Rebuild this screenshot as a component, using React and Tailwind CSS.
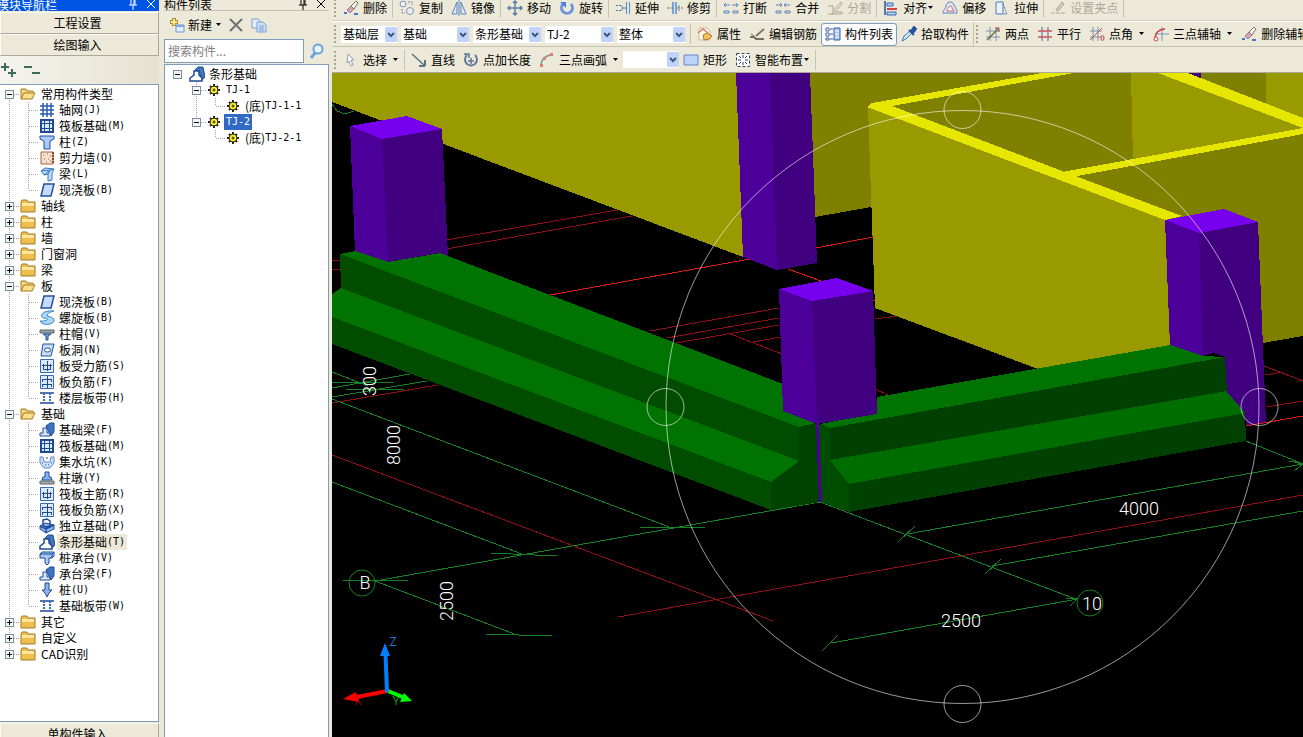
import React, { useState } from 'react';
import clsx from 'clsx';

// Small drawings used by the toolbars and the trees, all on a 16x16 grid
const icons = {
  erase: (
    <>
      <path d="M1 13h3M11 14h4" stroke="#4a74c9" strokeWidth="2" />
      <path d="M4 10l4-4 3 3-4 4z" fill="#d9a3b4" stroke="#8b7f8f" />
      <path d="M8 6l5-5 2 2-4 6z" fill="#f2f2ea" stroke="#77776f" />
    </>
  ),
  copyObj: (
    <>
      <circle cx="4" cy="4" r="3" fill="#e8edf5" stroke="#8794aa" />
      <circle cx="11" cy="11" r="3.5" fill="#e8edf5" stroke="#8794aa" />
      <path d="M9 2h4v3M3 9v4h3" stroke="#5f7fb5" strokeDasharray="2 1" fill="none" />
    </>
  ),
  mirror: (
    <path d="M6 2v12H1zM10 2v12h5zM8 0v16" fill="#dfe9f8" stroke="#5a82bd" />
  ),
  move: (
    <path d="M8 1v14M1 8h14M6 3l2-2 2 2M6 13l2 2 2-2M3 6L1 8l2 2M13 6l2 2-2 2" fill="none" stroke="#5d7da8" strokeWidth="1.5" />
  ),
  rotate: (
    <>
      <path d="M4 4a5.500 5.500 0 1 0 8 0" fill="none" stroke="#6f94dd" strokeWidth="3" />
      <path d="M1 2h6v6z" fill="#4f7ed6" />
    </>
  ),
  extend: (
    <>
      <path d="M1 5.500h6v5H1" fill="none" stroke="#4c72ad" strokeDasharray="2 1" />
      <path d="M7 8h4" stroke="#4c72ad" />
      <path d="M11.500 2v12M14.500 2v12" stroke="#4c8bdb" />
    </>
  ),
  trim: (
    <>
      <path d="M6 2v12M9 2v12" stroke="#4c8bdb" strokeWidth="1.500" />
      <path d="M0 8h6M10 8h6M12 5v6" stroke="#6d7c94" strokeDasharray="3 1" />
    </>
  ),
  breakLine: (
    <path d="M1 5h6M9 5h6M3 3L1 5l2 2M13 3l2 2-2 2M1 11h5v2H1zM10 11h5v2h-5z" fill="none" stroke="#5f83b7" />
  ),
  merge: (
    <path d="M1 5h6M9 5h6M5 3l2 2-2 2M11 3L9 5l2 2M1 11h5v2H1zM10 11h5v2h-5z" fill="none" stroke="#5f83b7" />
  ),
  split: (
    <path d="M1 6h5v8H1M7 12h8v2H4M6 11l8-9 1 2-7 8" fill="none" stroke="#aaa798" />
  ),
  align: (
    <>
      <path d="M2 1v14" stroke="#27509f" strokeWidth="1.500" />
      <path d="M4 3h6v3H4zM4 12h9v3H4z" fill="#b7d0f5" stroke="#3866b5" />
      <path d="M4 9h10" stroke="#cf4343" strokeWidth="2" />
    </>
  ),
  offset: (
    <>
      <path d="M1 13c0-5 3-3 3-7s6-6 8-1c1 3 3 3 3 8z" fill="#dce7f7" stroke="#5f83b7" />
      <path d="M5 11c0-3 1-2 2-4s3-1 3 1 2 1 2 3z" fill="#fff" stroke="#d45a5a" />
    </>
  ),
  stretch: (
    <>
      <path d="M2 2h7v12H2z" fill="#eaf1fb" stroke="#4f79b7" />
      <path d="M9 4l4 10H9" fill="none" stroke="#4f79b7" strokeDasharray="2 1" />
    </>
  ),
  grip: (
    <path d="M1 13h4M11 13h4M6 13h4M6 10l6-8 2 2-6 7z" fill="#cfccbd" stroke="#aaa798" />
  ),
  props: (
    <>
      <path d="M2 2h8l3 3v9H2z" fill="#fdfaf0" stroke="#d8b48a" />
      <path d="M1 7l5-4 5 4" fill="none" stroke="#df7a6a" strokeWidth="1.500" />
      <path d="M6 9l4-2 5 3-3 3-5 1z" fill="#f3c45b" stroke="#a7782c" />
    </>
  ),
  editBar: (
    <>
      <path d="M1 11h4l2 2h8" fill="none" stroke="#494a40" strokeWidth="1.500" />
      <path d="M7 10l8-7" stroke="#7d7a68" strokeWidth="2" />
      <path d="M2 8l3 2" stroke="#a23c3c" />
    </>
  ),
  list: (
    <>
      <path d="M1 2h3v3H1zM1 7h3v3H1zM1 12h3v2H1z" fill="#fff" stroke="#3963a5" />
      <path d="M5 3h3M5 8h3M5 13h3" stroke="#3963a5" />
      <path d="M9 2h6v12H9z" fill="#a9c6f3" stroke="#3963a5" />
      <path d="M10 5h4M10 8h4M10 11h4" stroke="#fff" />
    </>
  ),
  pick: (
    <>
      <path d="M1 15l2-5 6-5 2 2-6 6z" fill="#cfe4fb" stroke="#4878bd" />
      <path d="M8 4l5 5M10 5l3-4 2 2-3 4z" fill="#2a60b8" stroke="#23509d" strokeWidth="2" />
    </>
  ),
  twoPoint: (
    <>
      <path d="M5 1v14M11 1v14M1 5h14M1 11h14" stroke="#7d8fb0" />
      <path d="M2 14L14 2" stroke="#6c6f3c" strokeWidth="1.500" />
      <path d="M10 2h4v4" fill="none" stroke="#c25050" />
    </>
  ),
  parallel: (
    <>
      <path d="M5 1v14M11 1v14" stroke="#7d8fb0" strokeWidth="1.500" />
      <path d="M1 5h14M1 11h14" stroke="#cc5555" strokeWidth="1.500" />
    </>
  ),
  pointAngle: (
    <>
      <path d="M4 1v14M9 1v14M1 5h12M1 11h12" stroke="#7d8fb0" />
      <path d="M1 14L13 2" stroke="#c25050" />
      <ellipse cx="13.500" cy="12" rx="1.500" ry="2.500" fill="none" stroke="#cc3b3b" />
    </>
  ),
  threeAxis: (
    <>
      <path d="M9 1v14M2 8h14" stroke="#7d8fb0" />
      <path d="M2 13c0-6 4-10 10-10" fill="none" stroke="#cc4444" strokeWidth="1.500" />
      <circle cx="3" cy="13" r="2" fill="#fff" stroke="#cc4444" />
    </>
  ),
  cursor: (
    <path d="M5 2l6 6H8l2 5-2 1-2-5-2 2z" fill="#fff" stroke="#8e9db8" />
  ),
  line: (
    <>
      <path d="M1 2l12 11" stroke="#5d7387" strokeWidth="1.500" />
      <path d="M14 14V8M14 14H8" stroke="#5d7387" strokeWidth="2" />
    </>
  ),
  pointLength: (
    <>
      <path d="M4 3a6 6 0 1 0 8 0" fill="none" stroke="#5f7896" strokeWidth="2" />
      <path d="M8 6v6M5 9h6M1 2h5v4" fill="none" stroke="#5f7896" strokeWidth="1.500" />
    </>
  ),
  arc: (
    <>
      <path d="M2 14C2 7 7 3 13 3" fill="none" stroke="#7e91a5" strokeWidth="1.500" />
      <path d="M1 12h3v3H1zM4 5h3v3H4zM11 1h3v3h-3z" fill="#df7d73" />
    </>
  ),
  rect: <path d="M1 3h14v10H1z" fill="#bdd2fb" stroke="#6585c8" />,
  smart: (
    <>
      <path d="M1.500 1.500h13v13h-13z" fill="#fff" stroke="#35425c" strokeDasharray="3 2" />
      <path d="M8 3v3M8 10v3M3 8h3M10 8h3M4 4l2 2M12 4l-2 2M4 12l2-2M12 12l-2-2" stroke="#35425c" />
    </>
  ),
  folder: (
    <>
      <path d="M1 4l1-2h5l1 2h7v10H1z" fill="#eebf4d" stroke="#a87a22" />
      <path d="M2 5h12v3H2z" fill="#fbe7a1" />
    </>
  ),
  folderOpen: (
    <>
      <path d="M1 13V3h5l1 2h6v3" fill="#f6d67c" stroke="#a87a22" />
      <path d="M1 13l3-6h11l-3 6z" fill="#fbe08b" stroke="#a87a22" />
    </>
  ),
  grid: (
    <path d="M4 1v14M8 1v14M12 1v14M1 4h14M1 8h14M1 12h14" stroke="#2a5cad" strokeWidth="1.500" />
  ),
  raft: (
    <>
      <path d="M2 2h12v12H2z" fill="#dce9fb" stroke="#1e4a94" strokeWidth="2" />
      <path d="M5.500 3v10M10.500 3v10M3 5.500h10M3 10.500h10" fill="none" stroke="#1e4a94" />
    </>
  ),
  column: (
    <path d="M1 2h14v3l-4 2v8H5V7L1 5z" fill="#a9c9f7" stroke="#23509d" />
  ),
  shearWall: (
    <>
      <path d="M2 2h12v12H2z" fill="#f3e0cf" stroke="#a5653e" />
      <path d="M4 5h1M8 4h1M11 6h1M5 9h1M9 9h1M7 12h1M11 11h1" stroke="#c94d3a" />
      <path d="M14 2v12" stroke="#87492c" strokeDasharray="2 1" strokeWidth="2" />
    </>
  ),
  beam: (
    <path d="M2 5l4-3 9 1-2 4v7l-4 1V8l-4 1zM2 5l9-1 4-1M11 4L9 8M5 9l6-5" fill="#bcdcf9" stroke="#3477c4" />
  ),
  slab: <path d="M5 2h10l-3 12H2z" fill="#c5dcfb" stroke="#23509d" strokeWidth="1.500" />,
  spiral: (
    <path d="M15 1C6 0 1 4 3 7c2 2 7 1 5 3-1 1-4 1-7 1 2 5 13 4 14 0 1-4-5-4-7-5 0-3 4-4 7-5z" fill="#a8d8f7" stroke="#3d83c9" />
  ),
  cap: (
    <>
      <path d="M1 4h14v3H1z" fill="#9aa2a6" stroke="#5c666b" />
      <path d="M4 8h8l-3 2v4H7v-4z" fill="#7fa8ea" stroke="#23509d" />
    </>
  ),
  hole: (
    <>
      <path d="M4 2h11l-3 12H2z" fill="#c5dcfb" stroke="#23509d" />
      <ellipse cx="8.500" cy="8" rx="3" ry="2" fill="#fff" stroke="#23509d" />
    </>
  ),
  slabRebar: (
    <>
      <path d="M1.500 1.500h13v13h-13z" fill="#dce9fb" stroke="#3a69b8" />
      <path d="M4.500 6v5.500h7V6M8.500 3v10M3 7.500h10" fill="none" stroke="#1e4a94" />
    </>
  ),
  negRebar: (
    <>
      <path d="M1.500 1.500h13v13h-13z" fill="#dce9fb" stroke="#3a69b8" />
      <path d="M8.500 2v12M3 5.500h10M3 10.500h10M3.500 6v2M12.500 6v2M3.500 11v2M12.500 11v2" stroke="#1e4a94" />
    </>
  ),
  strap: (
    <>
      <path d="M1 3h14M1 13h14" stroke="#1e4a94" strokeWidth="1.500" />
      <path d="M5 3v10M11 3v10" stroke="#3a69b8" strokeWidth="2" strokeDasharray="2 1" />
    </>
  ),
  foundBeam: (
    <>
      <path d="M7 4l4-3h4v9l-3 4z" fill="#3c72c4" stroke="#1e4a94" />
      <path d="M1 14v-3h3V6h4v5h3v3z" fill="#d6e6fc" stroke="#1e4a94" />
    </>
  ),
  sump: (
    <>
      <path d="M1 3h3l1 5h6l1-5h3v6l-4 5H5L1 9z" fill="#cfe0f8" stroke="#5c8ad0" />
      <path d="M3 9h1M6 11h1M9 11h1M12 9h1M7 4h2" stroke="#1e4a94" />
    </>
  ),
  pier: (
    <>
      <path d="M6 2h4v5h2l1 3H3l1-3h2z" fill="#8db3ef" stroke="#23509d" />
      <path d="M1 11h14v3H1z" fill="#a3a9ac" stroke="#5c666b" />
    </>
  ),
  isolated: (
    <>
      <path d="M1 8l5-3 9 2v4l-8 4-6-4z" fill="#8fb3ea" stroke="#1e4a94" />
      <path d="M4 2l4-1 3 2v5L7 9 4 7zM1 8l6 3 8-4M7 11v4" fill="none" stroke="#1e4a94" strokeWidth="1.500" />
    </>
  ),
  strip: (
    <>
      <path d="M6 4l3-3h5l2 10-3 3-3-9z" fill="#4576bd" stroke="#1e4a94" />
      <path d="M5 5h5v4l3 3v3H1v-3l4-3z" fill="#fff" stroke="#1e4a94" strokeWidth="1.500" />
    </>
  ),
  pileCap: (
    <path d="M1 4l2-2h12v4l-2 2h-3v5l-2 2-2-2V8H1zM1 4h12v4M13 4l2-2" fill="#a9c9f7" stroke="#1e4a94" />
  ),
  pile: <path d="M6 1h4v7h3l-3 3-2 4-2-4-3-3h3z" fill="#8fb3ea" stroke="#1e4a94" />,
  gear: (
    <>
      <path d="M8 2v12M2 8h12M4 4l8 8M12 4l-8 8" stroke="#222" strokeWidth="2" />
      <circle cx="8" cy="8" r="4" fill="#ffee22" stroke="#222" />
      <circle cx="8" cy="8" r="1" fill="#fff" stroke="#222" />
    </>
  ),
  newItem: (
    <>
      <path d="M5 1v8M1 5h8" stroke="#a98f35" strokeWidth="4" />
      <path d="M5 2v6M2 5h6" stroke="#fbe98c" strokeWidth="2" />
      <path d="M7 8h8v7H7z" fill="#e4eefc" stroke="#7496c9" />
      <path d="M7 8h8v2H7z" fill="#7ba6ea" />
    </>
  ),
  remove: <path d="M2 2l12 12M14 2L2 14" stroke="#6f7377" strokeWidth="2" />,
  duplicate: (
    <>
      <path d="M1 2h6l2 2v7H1z" fill="#e4eefc" stroke="#7d9fd0" />
      <path d="M6 5h6l3 3v7H6z" fill="#cfe0f8" stroke="#7d9fd0" />
      <path d="M8 9h5M8 11h5M8 13h5" stroke="#7d9fd0" />
    </>
  ),
  search: (
    <>
      <circle cx="9" cy="6" r="4.500" fill="#e9f5fe" stroke="#6aa3de" strokeWidth="2" />
      <path d="M6 10l-4 5" stroke="#6aa3de" strokeWidth="3" />
    </>
  ),
  expandAll: (
    <path d="M5 1v8M1 5h8M12 7v8M8 11h8" stroke="#3d6b5c" strokeWidth="2" />
  ),
  collapseAll: <path d="M0 5h8M8 11h8" stroke="#3d6b5c" strokeWidth="2" />,
  pin: (
    <path d="M5 3h6M6 3v6M10 3v6M9 3v6M4 9h8M8 9v5" fill="none" stroke="currentColor" />
  ),
  close: <path d="M4 4l8 8M12 4l-8 8" stroke="currentColor" />
};

const Icon = ({ name }) => (
  <svg viewBox="0 0 16 16" className="h-4 w-4 shrink-0" fill="none" aria-hidden="true">
    {icons[name]}
  </svg>
);

const Caret = () => (
  <svg viewBox="0 0 7 4" className="h-1 w-[7px] shrink-0" aria-hidden="true">
    <path d="M1 0h5L3.500 3z" fill="#000" />
  </svg>
);

const ToolButton = ({ icon, label, menu, pressed, disabled }) => (
  <button
    type="button"
    disabled={disabled}
    aria-pressed={pressed}
    className={clsx(
      'flex h-[23px] shrink-0 items-center whitespace-nowrap',
      pressed ? 'rounded-[3px] border border-[#7b9ebd] bg-[#fbfbf9] px-[3px]' : 'px-1',
      disabled && 'text-[#aca899]'
    )}
  >
    <Icon name={icon} />
    <span className={clsx('pl-1', menu === 'split' && 'pr-[5px]')}>{label}</span>
    {menu && <Caret />}
  </button>
);

const Separator = () => <span className="ml-px mr-[2px] h-5 w-px shrink-0 bg-[#c5c2b2]" />;

const Grip = () => <span className="mx-[2px] h-[18px] w-[3px] shrink-0 border-l-2 border-dotted border-[#a8a595]" />;

const Combo = ({ label, options, narrow }) => (
  <div className={clsx('relative h-[17px] shrink-0 bg-white', narrow ? 'w-14' : 'w-[68px]')}>
    <select aria-label={label} className="h-full w-full appearance-none truncate bg-transparent pl-[2px] pr-3 leading-4 outline-none">
      {options.map((option) => (
        <option key={option}>{option}</option>
      ))}
    </select>
    <svg viewBox="0 0 12 15" className="pointer-events-none absolute right-0 top-px h-[15px] w-3" aria-hidden="true">
      <rect width="12" height="15" rx="1" fill="#c1d3fb" />
      <path d="M3 6l3 3 3-3" fill="none" stroke="#3f557d" strokeWidth="2" />
    </svg>
  </div>
);

const editTools = [
  [{ icon: 'erase', label: '删除' }],
  [{ icon: 'copyObj', label: '复制' }, { icon: 'mirror', label: '镜像' }],
  [{ icon: 'move', label: '移动' }, { icon: 'rotate', label: '旋转' }],
  [{ icon: 'extend', label: '延伸' }, { icon: 'trim', label: '修剪' }],
  [{ icon: 'breakLine', label: '打断' }, { icon: 'merge', label: '合并' }, { icon: 'split', label: '分割', disabled: true }],
  [{ icon: 'align', label: '对齐', menu: 'drop' }, { icon: 'offset', label: '偏移' }, { icon: 'stretch', label: '拉伸' }],
  [{ icon: 'grip', label: '设置夹点', disabled: true }]
];

const axisTools = [
  { icon: 'twoPoint', label: '两点' },
  { icon: 'parallel', label: '平行' },
  { icon: 'pointAngle', label: '点角', menu: 'split' },
  { icon: 'threeAxis', label: '三点辅轴', menu: 'split' },
  { icon: 'erase', label: '删除辅轴' }
];

const Toolbars = () => (
  <div className="shrink-0 border-b border-[#aca899]">
    <div className="-mt-[5px] flex h-[26px] items-center border-b border-[#d0cdbc]">
      <Grip />
      {editTools.map((group, index) => (
        <React.Fragment key={index}>
          {index > 0 && <Separator />}
          {group.map((tool) => (
            <ToolButton key={tool.label} {...tool} />
          ))}
        </React.Fragment>
      ))}
      <Separator />
    </div>

    <div className="flex h-[26px] items-center border-b border-[#c5c2b2] border-t border-t-white">
      <Grip />
      <div className="flex shrink-0 gap-1 pl-[2px] pr-1">
        <Combo label="楼层" options={['基础层']} narrow />
        <Combo label="构件分类" options={['基础']} />
        <Combo label="构件类型" options={['条形基础']} />
        <Combo label="构件" options={['TJ-2', 'TJ-1']} />
        <Combo label="显示范围" options={['整体']} />
      </div>
      <Separator />
      <ToolButton icon="props" label="属性" />
      <ToolButton icon="editBar" label="编辑钢筋" />
      <ToolButton icon="list" label="构件列表" pressed />
      <ToolButton icon="pick" label="拾取构件" />
      <div className="flex h-full shrink-0 items-center border-l border-[#c5c2b2]">
        <Grip />
        {axisTools.map((tool) => (
          <ToolButton key={tool.label} {...tool} />
        ))}
      </div>
    </div>

    <div className="flex h-[25px] items-center">
      <Grip />
      <ToolButton icon="cursor" label="选择" menu="split" />
      <Separator />
      <ToolButton icon="line" label="直线" />
      <ToolButton icon="pointLength" label="点加长度" />
      <ToolButton icon="arc" label="三点画弧" menu="split" />
      <Combo label="画弧方式" options={['']} narrow />
      <ToolButton icon="rect" label="矩形" />
      <ToolButton icon="smart" label="智能布置" menu="drop" />
      <Separator />
    </div>
  </div>
);

const navTree = [
  {
    name: '常用构件类型',
    children: [
      ['轴网', 'J', 'grid'],
      ['筏板基础', 'M', 'raft'],
      ['柱', 'Z', 'column'],
      ['剪力墙', 'Q', 'shearWall'],
      ['梁', 'L', 'beam'],
      ['现浇板', 'B', 'slab']
    ]
  },
  { name: '轴线' },
  { name: '柱' },
  { name: '墙' },
  { name: '门窗洞' },
  { name: '梁' },
  {
    name: '板',
    children: [
      ['现浇板', 'B', 'slab'],
      ['螺旋板', 'B', 'spiral'],
      ['柱帽', 'V', 'cap'],
      ['板洞', 'N', 'hole'],
      ['板受力筋', 'S', 'slabRebar'],
      ['板负筋', 'F', 'negRebar'],
      ['楼层板带', 'H', 'strap']
    ]
  },
  {
    name: '基础',
    children: [
      ['基础梁', 'F', 'foundBeam'],
      ['筏板基础', 'M', 'raft'],
      ['集水坑', 'K', 'sump'],
      ['柱墩', 'Y', 'pier'],
      ['筏板主筋', 'R', 'slabRebar'],
      ['筏板负筋', 'X', 'negRebar'],
      ['独立基础', 'P', 'isolated'],
      ['条形基础', 'T', 'strip'],
      ['桩承台', 'V', 'pileCap'],
      ['承台梁', 'F', 'foundBeam'],
      ['桩', 'U', 'pile'],
      ['基础板带', 'W', 'strap']
    ]
  },
  { name: '其它' },
  { name: '自定义' },
  { name: 'CAD识别' }
];

// Dotted connector lines left of a tree row, with an optional +/- box
const Guide = ({ width, lines, box }) => (
  <svg width={width} height="16" viewBox={`0 0 ${width} 16`} className="shrink-0" shapeRendering="crispEdges" aria-hidden="true">
    <path d={lines} fill="none" stroke="#a5a5a5" strokeDasharray="1 1" />
    {box && (
      <>
        <rect x={box.x - 4} y="4" width="8" height="8" fill="#f4f4f0" stroke="#7b8ca5" />
        <path d={box.open ? `M${box.x - 2} 8.5h5` : `M${box.x - 2} 8.5h5M${box.x + 0.5} 6v5`} stroke="#000" />
      </>
    )}
  </svg>
);

const NavTree = () => {
  const [open, setOpen] = useState({ 常用构件类型: true, 板: true, 基础: true });

  return (
    <ul className="min-h-0 flex-1 overflow-hidden border border-[#7f9db9] border-l-0 bg-white pt-px">
      {navTree.map((group, index) => {
        const isOpen = Boolean(open[group.name]);
        const isLast = index === navTree.length - 1;
        const start = index === 0 ? 8 : 0;
        return (
          <li key={group.name}>
            <button
              type="button"
              aria-expanded={isOpen}
              onClick={() => setOpen({ ...open, [group.name]: !isOpen })}
              className="flex h-4 items-center whitespace-nowrap"
            >
              <Guide width={20} lines={`M9.5 ${start}V${isLast ? 8 : 16}M10 8.5H20`} box={{ x: 9, open: isOpen }} />
              <Icon name={isOpen ? 'folderOpen' : 'folder'} />
              <span className="pl-[5px] leading-4">{group.name}</span>
            </button>
            {isOpen && group.children && (
              <ul>
                {group.children.map(([name, hotkey, icon], childIndex) => (
                  <li key={name} className="flex h-4 items-center whitespace-nowrap">
                    <Guide
                      width={39}
                      lines={`M9.5 0V16M28.5 0V${childIndex === group.children.length - 1 ? 8 : 16}M29 8.5H39`}
                    />
                    <Icon name={icon} />
                    <span className={clsx('ml-[2px] flex items-center px-[2px] leading-4', name === '条形基础' && 'bg-[#ece9d8]')}>
                      {name}
                      <span className="font-['DejaVu_Sans_Mono',monospace] text-[10px]">({hotkey})</span>
                    </span>
                  </li>
                ))}
              </ul>
            )}
          </li>
        );
      })}
    </ul>
  );
};

const PanelTitle = ({ title, active }) => (
  <div
    className={clsx(
      '-mt-[3px] flex h-[14px] shrink-0 items-center overflow-hidden',
      active ? 'bg-[#0054e3] text-white' : 'border-b border-[#c5c2b2] text-black'
    )}
  >
    <h2 className={clsx('flex-1 whitespace-nowrap pt-[2px]', active && '-ml-[3px]')}>{title}</h2>
    <button type="button" aria-label="固定" className="mr-[2px]"><Icon name="pin" /></button>
    <button type="button" aria-label="关闭"><Icon name="close" /></button>
  </div>
);

const panelButton = 'h-[22px] shrink-0 border border-[#fbfaf5] border-b-[#aca899] border-r-[#aca899] bg-[#ece9d8] pr-1 text-center';

const NavPanel = () => (
  <aside className="flex w-[159px] shrink-0 flex-col">
    <PanelTitle title="模块导航栏" active />
    <button type="button" className={clsx(panelButton, 'mt-px')}>工程设置</button>
    <button type="button" className={panelButton}>绘图输入</button>
    <div className="flex h-7 shrink-0 items-center gap-2 bg-gradient-to-r from-[#f4f3ee] to-[#e6e2d0]">
      <button type="button" aria-label="全部展开"><Icon name="expandAll" /></button>
      <button type="button" aria-label="全部折叠"><Icon name="collapseAll" /></button>
    </div>
    <NavTree />
    <button type="button" className={clsx(panelButton, '-mb-2 mt-px')}>单构件输入</button>
  </aside>
);

const componentRows = [
  { name: '条形基础', icon: 'strip', width: 24, lines: 'M0 0', box: 12 },
  { code: 'TJ-1', icon: 'gear', width: 41, lines: 'M31.5 0V16M32 8.5H41', box: 31 },
  { name: '(底)', code: 'TJ-1-1', icon: 'gear', width: 60, lines: 'M31.5 0V16M50.5 0V8M51 8.5H60' },
  { code: 'TJ-2', icon: 'gear', width: 41, lines: 'M31.5 0V8M32 8.5H41', box: 31 },
  { name: '(底)', code: 'TJ-2-1', icon: 'gear', width: 60, lines: 'M50.5 0V8M51 8.5H60' }
];

const ComponentPanel = () => {
  const [query, setQuery] = useState('');
  const [selected, setSelected] = useState(3);

  return (
    <aside className="ml-[5px] mr-[3px] flex w-[165px] shrink-0 flex-col">
      <PanelTitle title="构件列表" />
      <div className="flex h-[27px] shrink-0 items-center gap-[6px] pl-[5px]">
        <button type="button" className="flex items-center gap-[3px]">
          <Icon name="newItem" />
          新建
          <Caret />
        </button>
        <button type="button" aria-label="删除"><Icon name="remove" /></button>
        <button type="button" aria-label="复制" className="ml-px"><Icon name="duplicate" /></button>
      </div>
      <div className="flex h-[25px] shrink-0 items-center gap-[5px]">
        <input
          type="text"
          aria-label="搜索构件"
          placeholder="搜索构件..."
          value={query}
          onChange={(e) => setQuery(e.target.value)}
          className="h-6 w-[140px] border border-[#7f9db9] bg-white px-[3px] outline-none placeholder:text-[#808080]"
        />
        <button type="button" aria-label="搜索"><Icon name="search" /></button>
      </div>
      <ul className="mt-px min-h-0 flex-1 border border-[#7f9db9] border-b-0 bg-white pt-px">
        {componentRows.map((row, index) => (
          <li key={index}>
            <button type="button" onClick={() => setSelected(index)} className="flex h-4 items-center whitespace-nowrap">
              <Guide width={row.width} lines={row.lines} box={row.box && { x: row.box, open: true }} />
              <Icon name={row.icon} />
              <span className={clsx('ml-[2px] flex h-4 items-center px-[2px] leading-4', selected === index && 'bg-[#316ac5] text-white')}>
                {row.name}
                {row.code && <span className="font-['DejaVu_Sans_Mono',monospace] text-[10px]">{row.code}</span>}
              </span>
            </button>
          </li>
        ))}
      </ul>
    </aside>
  );
};

// Scene faces, painted back to front: [fill, points]
const faces = [
  // rear walls
  ['#999900', '332,73 740,73 743,257 332,102'],
  ['#808000', '808,73 1303,73 1303,336 1165,360 1100,200 871,207 815,217'],
  ['#999900', '1131,73 1165,73 1303,125 1303,131 1133,162'],
  ['#999900', '1266,73 1303,73 1303,120 1266,105'],
  ['#400080', '1184,73 1201,73 1201,79'],
  ['#999900', '868,107 1165,219 1170,350 1038,369 875,308'],
  // wall tops
  ['#e6e600', '872,103 980,84 1042,73 1074,73 980,90 892,106'],
  ['#e6e600', '1062,172 1303,128 1303,134 1072,177'],
  ['#e6e600', '1158,73 1188,73 1303,118 1303,128'],
  ['#e6e600', '867,107 872,103 892,106 1070,174 1182,216 1165,220'],
  // rear column
  ['#4d0099', '736,73 770,73 777,270 743,257'],
  ['#400080', '770,73 810,73 817,263 777,270'],
  // left strip footing
  ['#007300', '340,254 355,251 388,262 440,253 783,384 783,411 816,423 799,427'],
  ['#004d00', '340,254 799,427 799,461 341,288'],
  ['#007300', '332,294 341,288 799,461 771,482 332,317'],
  ['#004d00', '332,317 771,482 771,510 332,344'],
  ['#004300', '799,427 817,423 820,502 771,510 771,482 799,461'],
  // right strip footing
  ['#007300', '820,424 877,413 877,397 1170,345 1203,356 1225,357 830,428'],
  ['#004d00', '819,424 830,428 830,460 849,484 849,512 822,502'],
  ['#004000', '830,428 1225,357 1227,391 830,460'],
  ['#006d00', '830,460 1227,391 1245,413 849,484'],
  ['#004000', '849,484 1245,413 1246,441 849,512'],
  // left column
  ['#7700ee', '350,126 407,116 442,129 382,139'],
  ['#4d0099', '350,126 382,139 388,262 355,251'],
  ['#400080', '382,139 442,129 448,256 439,253 388,262'],
  // middle column
  ['#7700ee', '779,289 837,278 873,291 812,301'],
  ['#4d0099', '779,289 812,301 817,424 783,411'],
  ['#400080', '812,301 873,291 877,414 817,424'],
  ['#4d0099', '816,423 819,423 822,502 819,502'],
  // right column
  ['#7700ee', '1165,220 1224,209 1258,222 1199,233'],
  ['#4d0099', '1165,220 1199,233 1203,356 1170,345'],
  ['#400080', '1199,233 1258,222 1266,423 1246,426 1245,413 1227,392 1225,357 1214,353 1203,356']
];

const Scene = () => (
  <svg
    viewBox="332 73 971 664"
    preserveAspectRatio="xMinYMin slice"
    className="block h-full w-full bg-black"
    role="img"
    aria-label="三维视图"
  >
    <g fill="none" shapeRendering="crispEdges">
      <path
        stroke="#8f0f14"
        d="M332 261l10-1M332 270l10-1M446 240L617 210M446 249L632 216M650 331L779 308M667 338L779 318M676 343L779 325M753 342L781 337M728 333L782 354M875 319L897 316M875 389L888 395M1264 366L1303 381M1265 375L1283 372M1266 407L1303 401M332 455L773 621M618 617L1303 495M332 403L438 385"
      />
      <path stroke="#e01818" d="M550 295L750 259M816 248L873 237M788 269L821 281M871 301l5-1M1246 426L1303 416" />
      <path
        stroke="#158024"
        d="M332 104l5 7 8 3 9-3M332 372L368 386M332 382L394 383M332 388L410 374M332 397L427 381M346 389H404M332 399L672 528M639 527L705 528M332 482L522 554M491 553L557 556M375 581L820 502M375 581L517 635M485 634L552 636M342 580L408 581"
      />
      <path
        stroke="#158024"
        d="M820 502L1078 600M907 534L1303 464M1246 441L1303 464L1294 471M1303 464l-14-3M992 566L1303 511M831 643L1078 599M898 542L915 526M985 574L1001 559M822 651L838 635M1070 606L1079 597M1078 599l-12-1"
      />
    </g>
    <g shapeRendering="crispEdges">
      {faces.map(([fill, points]) => (
        <polygon key={points} fill={fill} points={points} />
      ))}
      <path d="M1246 426L1303 416" stroke="#e01818" />
    </g>
    <g fill="none" stroke="#158024">
      <circle cx="362" cy="583" r="13" />
      <circle cx="1090" cy="603" r="13" />
    </g>
    {/* Orbit ring with its four handles */}
    <g fill="none" stroke="#fff" strokeOpacity="0.6">
      <circle cx="962.5" cy="407" r="296.5" />
      <circle cx="962.5" cy="110" r="18.5" />
      <circle cx="962.5" cy="704" r="18.5" />
      <circle cx="665.5" cy="407" r="18.5" />
      <circle cx="1259.5" cy="407" r="18.5" />
    </g>
    <g className="fill-white font-['Roboto',sans-serif] text-[18px] font-light" textAnchor="middle">
      <text x="1139" y="515">4000</text>
      <text x="961" y="627">2500</text>
      <text x="1092" y="610">10</text>
      <text x="365" y="589">B</text>
      <text transform="translate(376 381) rotate(-90)">300</text>
      <text transform="translate(400 445) rotate(-90)">8000</text>
      <text transform="translate(453 601) rotate(-90)">2500</text>
    </g>
    {/* Axis tripod */}
    <g className="font-['Roboto',sans-serif] text-[12px] font-light" textAnchor="middle">
      <path d="M387 691L357 697" stroke="#f00" strokeWidth="4" />
      <path d="M343 699l13-7 3 10z" fill="#f00" />
      <path d="M388 691L405 698" stroke="#0f0" strokeWidth="4" />
      <path d="M412 701l-8-8-4 9z" fill="#0f0" />
      <path d="M387 692L385.5 654" stroke="#0080ff" strokeWidth="4" />
      <path d="M385 643l5 13h-10z" fill="#0080ff" />
      <text x="393" y="646" fill="#2f8cff">Z</text>
      <text x="358" y="705" fill="#c00">X</text>
      <text x="396" y="705" fill="#0d0">Y</text>
    </g>
  </svg>
);

const App = () => (
  <div className="flex h-screen overflow-hidden bg-[#ece9d8] font-['Noto_Sans_CJK_SC',sans-serif] text-[12px] leading-4 text-black">
    <NavPanel />
    <ComponentPanel />
    <main className="flex min-w-0 flex-1 flex-col overflow-hidden">
      <Toolbars />
      <div className="min-h-0 flex-1">
        <Scene />
      </div>
    </main>
  </div>
);

export default App;
